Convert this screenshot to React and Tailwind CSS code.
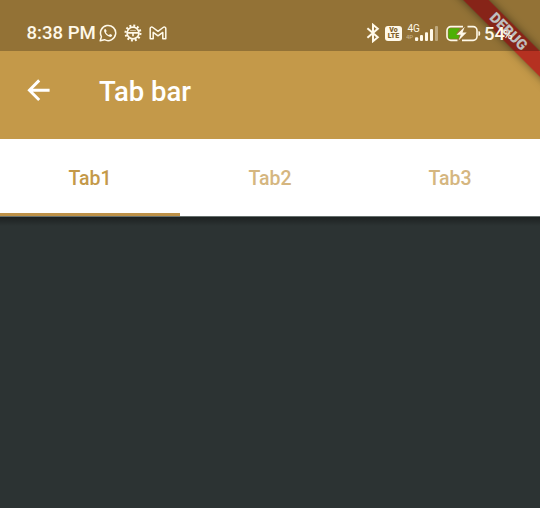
import React from 'react';

function Bluetooth() {
  return (
    <svg className="h-[20px] w-[14px]" viewBox="0 0 14 20" fill="none" stroke="currentColor" strokeWidth="2">
      <path d="M1.4 5.2 11.8 14.3 7 18.2V1.8l4.8 3.9L1.4 14.8" />
    </svg>
  );
}

function WhatsApp() {
  return (
    <svg className="h-[18px] w-[18px]" viewBox="0 0 18 18" fill="none">
      <path d="m1.2 16.8 1.2-4.2A7.6 7.6 0 1 1 5.5 15.7Z" stroke="currentColor" strokeWidth="1.5" strokeLinejoin="round" />
      <path d="M6.3 4.8c-1.1.5-1.5 1.7-.9 3.2 1 2.4 2.8 4.1 5.2 4.8 1.4.3 2.5-.3 2.6-1.8l-2.1-1.1-1.1 1.2c-1.4-.5-2.4-1.5-3.1-2.9l.8-1.1Z" fill="currentColor" />
    </svg>
  );
}

function Gear() {
  return (
    <svg className="h-[18px] w-[18px]" viewBox="0 0 18 18" fill="none" stroke="currentColor">
      <circle cx="9" cy="9" r="7.4" strokeWidth="2.2" strokeDasharray="1.94 1.94" />
      <circle cx="9" cy="9" r="5.9" strokeWidth="1.6" />
      <path d="M3.5 8.9h11M9 9v3.2" strokeWidth="1.6" />
      <path d="M6.1 6.6h5.8" strokeWidth=".6" />
    </svg>
  );
}

function Mail() {
  return (
    <svg className="h-[14px] w-[18px]" viewBox="0 0 18 14" fill="none" stroke="currentColor" strokeWidth="1.5" strokeLinejoin="round">
      <path d="M1.2 12.7V2.6C1.2 1 2.8.7 3.9 1.5L9 5.3l5.1-3.8c1.1-.8 2.7-.5 2.7 1.1v10.1h-3V6.4L9 9.8 4.2 6.4v6.3Z" />
    </svg>
  );
}

function Signal() {
  return (
    <svg className="h-[22px] w-[33px]" viewBox="0 0 33 22" fill="currentColor">
      <text x="1.5" y="9.8" fontSize="10" className="font-['Roboto',sans-serif]">4G</text>
      <text x="0" y="17.2" fontSize="6" opacity=".5" className="font-['Roboto',sans-serif]">4P</text>
      <rect x="9" y="15.2" width="3.2" height="3.8" rx="1" />
      <rect x="14" y="13" width="3" height="6" rx="1" />
      <rect x="19" y="10.2" width="3" height="8.8" rx="1" />
      <rect x="24" y="7" width="3" height="12" rx="1" />
      <rect x="29" y="4" width="3" height="15" rx="1" opacity=".4" />
    </svg>
  );
}

function Battery() {
  return (
    <svg className="h-[17px] w-[35px]" viewBox="0 0 35 17" fill="none">
      <path d="M4 3.2h10L9.7 9.6h3.6l-1 4.2H4a1.5 1.5 0 0 1-1.5-1.5V4.7C2.5 3.9 3.2 3.2 4 3.2Z" fill="#4eb005" />
      <path d="M17 1.6H4.8a3.8 3.8 0 0 0-3.8 3.8v6.2a3.8 3.8 0 0 0 3.8 3.8h6.7M21.5 1.6h5.7A3.8 3.8 0 0 1 31 5.4v6.2a3.8 3.8 0 0 1-3.8 3.8H16" stroke="currentColor" strokeWidth="1.6" />
      <path d="m18.8 1.8-8.3 8h4.3l-2.3 5.8 8.2-8.2h-4.2Z" fill="currentColor" />
      <path d="M32.4 6.2c1.6 0 1.8.6 1.8 2.3s-.2 2.3-1.8 2.3Z" fill="currentColor" />
    </svg>
  );
}

function DebugBanner() {
  return (
    <div className="pointer-events-none absolute right-0 top-0 h-[100px] w-[100px] overflow-hidden">
      <div className="absolute left-[-7px] top-[23px] flex h-[18px] w-[150px] rotate-45 items-center justify-center bg-[#b4261d]/90 text-[14.5px] font-black leading-none text-white shadow-[0_0_9px_rgba(0,0,0,0.5)]">
        DEBUG
      </div>
    </div>
  );
}

function StatusBar() {
  return (
    <div className="relative z-10 flex h-[51px] items-start justify-between bg-black/25 pl-[26px] text-[#fff9e9]">
      <div className="mt-[24px] flex h-[18px] items-center">
        <span className="w-[73px] whitespace-nowrap pl-[0.5px] pt-px text-[18.6px] font-medium leading-none">8:38 PM</span>
        <WhatsApp />
        <div className="ml-[7px]"><Gear /></div>
        <div className="ml-[7px]"><Mail /></div>
      </div>
      <div className="mt-[23px] flex h-[20px] w-[174px] items-center">
        <Bluetooth />
        <div className="ml-[5px] flex h-[15px] w-[17px] flex-col items-center justify-center rounded-[3px] bg-[#fff9e9] text-[7px] font-black leading-[6.5px] text-[#805f2a]">
          <span>Vo</span>
          <span>LTE</span>
        </div>
        <div className="ml-[4px]"><Signal /></div>
        <div className="ml-[7px]"><Battery /></div>
        <span className="ml-[3px] pt-[2px] text-[18.5px] font-medium leading-none">54</span>
        <span className="ml-[-2px] pt-[2px] text-[13px] leading-none">%</span>
      </div>
    </div>
  );
}

function AppBar() {
  return (
    <header className="flex h-[88px] items-center pb-[8px] pl-[27px] text-white">
      <svg className="h-[24px] w-[24px]" viewBox="0 0 24 24" fill="none" stroke="currentColor" strokeWidth="2.9">
        <path d="M22.6 11.2H2.5M12.2 1.4 2.4 11.2l9.8 9.8" />
      </svg>
      <h1 className="ml-[48px] pt-px text-[27.5px] font-medium leading-none">Tab bar</h1>
    </header>
  );
}

function Tabs() {
  return (
    <nav className="grid h-[77px] shrink-0 grid-cols-3 bg-white text-[19.5px] text-[#c49949]">
      <div className="flex items-center justify-center border-b-[3px] border-[#bd9148] pt-[5px] font-medium">Tab1</div>
      <div className="flex items-center justify-center pt-[2px] font-medium text-[#d5b680]">Tab2</div>
      <div className="flex items-center justify-center pt-[2px] font-medium text-[#d5b680]">Tab3</div>
    </nav>
  );
}

export default function App() {
  return (
    <div className="flex h-[508px] w-[540px] flex-col overflow-hidden bg-[#2c3333] font-['Roboto',sans-serif]">
      <div className="relative h-[139px] shrink-0 bg-[#c49949]">
        <DebugBanner />
        <StatusBar />
        <AppBar />
      </div>
      <Tabs />
      <main className="flex-1 border-t border-[#66706e]">
        <div className="h-[9px] bg-gradient-to-b from-black/35 to-transparent" />
      </main>
    </div>
  );
}
